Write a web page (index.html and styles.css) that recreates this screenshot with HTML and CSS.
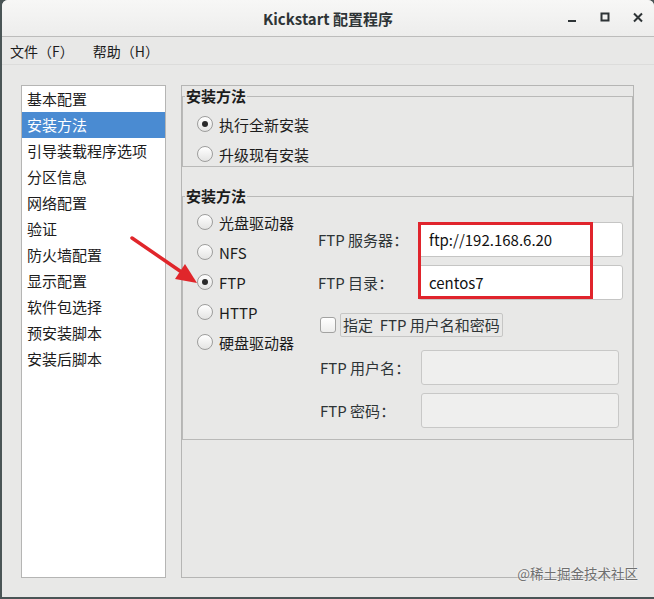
FILE: index.html
```html
<!DOCTYPE html>
<html lang="zh-CN">
<head>
    <meta charset="UTF-8">
    <title>Kickstart 配置程序</title>
    <link rel="stylesheet" href="styles.css">
</head>
<body>
    <div class="window">
        <div class="titlebar">
            <span></span>
            <span class="title">Kickstart 配置程序</span>
            <div class="controls">
                <span class="ctl"><svg width="12" height="12" viewBox="0 0 12 12"><rect x="2" y="8" width="8" height="2" fill="#2e3436"/></svg></span>
                <span class="ctl"><svg width="12" height="12" viewBox="0 0 12 12"><rect x="2.5" y="1.5" width="7" height="7" fill="none" stroke="#2e3436" stroke-width="2"/></svg></span>
                <span class="ctl"><svg width="12" height="12" viewBox="0 0 12 12"><path d="M2 1.5 L10 9.5 M10 1.5 L2 9.5" stroke="#2e3436" stroke-width="2"/></svg></span>
            </div>
        </div>

        <div class="menubar">
            <span>文件（F）</span>
            <span>帮助（H）</span>
        </div>

        <div class="content">
            <ul class="nav">
                <li>基本配置</li>
                <li class="active">安装方法</li>
                <li>引导装载程序选项</li>
                <li>分区信息</li>
                <li>网络配置</li>
                <li>验证</li>
                <li>防火墙配置</li>
                <li>显示配置</li>
                <li>软件包选择</li>
                <li>预安装脚本</li>
                <li>安装后脚本</li>
            </ul>

            <div class="panel">
                <fieldset class="frame frame-type">
                    <legend>安装方法</legend>
                    <div class="radio-list">
                        <label class="radio checked"><span class="dot"></span>执行全新安装</label>
                        <label class="radio"><span class="dot"></span>升级现有安装</label>
                    </div>
                </fieldset>

                <fieldset class="frame frame-method">
                    <legend>安装方法</legend>
                    <div class="method">
                        <div class="radio-list media">
                            <label class="radio"><span class="dot"></span>光盘驱动器</label>
                            <label class="radio"><span class="dot"></span>NFS</label>
                            <label class="radio checked"><span class="dot"></span>FTP</label>
                            <label class="radio"><span class="dot"></span>HTTP</label>
                            <label class="radio"><span class="dot"></span>硬盘驱动器</label>
                        </div>

                        <div class="ftp-form">
                            <div class="row">
                                <span class="label">FTP 服务器<span class="colon">：</span></span>
                                <div class="input">ftp://192.168.6.20</div>
                            </div>
                            <div class="row">
                                <span class="label">FTP 目录<span class="colon">：</span></span>
                                <div class="input">centos7</div>
                            </div>
                            <div class="check-row">
                                <span class="checkbox"></span>
                                <span class="check-label">指定  FTP 用户名和密码</span>
                            </div>
                            <div class="row row-off">
                                <span class="label">FTP 用户名<span class="colon">：</span></span>
                                <div class="input disabled"></div>
                            </div>
                            <div class="row row-off">
                                <span class="label">FTP 密码<span class="colon">：</span></span>
                                <div class="input disabled"></div>
                            </div>
                            <div class="highlight"></div>
                        </div>
                    </div>
                </fieldset>
            </div>
        </div>

        <svg class="arrow" width="75" height="58" viewBox="0 0 75 58">
            <line x1="4" y1="6" x2="52" y2="39" stroke="#e0262b" stroke-width="3.5" stroke-linecap="round"/>
            <polygon points="69,51 47,47 57,32" fill="#e0262b"/>
        </svg>

        <div class="watermark">@稀土掘金技术社区</div>
    </div>
</body>
</html>
```

FILE: styles.css
```css
body {
    margin: 0;
    background: #4a5556;
    font-family: "Noto Sans CJK SC", "Noto Sans", sans-serif;
    color: #1c1c1c;
}

.window {
    position: relative;
    margin-left: 2px;
    width: 652px;
    height: 597px;
    background: #e8e8e7;
    border-radius: 6px 6px 0 0;
    display: flex;
    flex-direction: column;
    overflow: hidden;
}

.titlebar {
    height: 36px;
    display: grid;
    grid-template-columns: 1fr auto 1fr;
    align-items: center;
    background: linear-gradient(#f7f7f6, #ededec);
    border-bottom: 1px solid #bcbcbb;
}

.title {
    font-size: 15px;
    font-weight: 700;
    color: #2e3436;
}

.controls {
    justify-self: end;
    display: flex;
}

.ctl {
    width: 33px;
    height: 36px;
    display: flex;
    align-items: center;
    justify-content: center;
}

.menubar {
    height: 27px;
    display: flex;
    align-items: center;
    gap: 19px;
    padding-left: 8px;
    font-size: 14px;
    border-bottom: 1px solid #dcdcdb;
}

.content {
    flex: 1;
    display: flex;
    gap: 15px;
    padding: 20px 20px 19px 19px;
    min-height: 0;
}

.nav {
    width: 143px;
    margin: 0;
    padding: 0;
    list-style: none;
    background: #fff;
    border: 1px solid #b5b5b4;
    font-size: 15px;
}

.nav li {
    height: 26px;
    line-height: 26px;
    padding-left: 5px;
}

.nav li.active {
    background: #4a8bd2;
    color: #fff;
}

.panel {
    flex: 1;
    border: 1px solid #b5b5b4;
}

.frame {
    margin: 0;
    padding: 0;
    border: 1px solid #b9b9b8;
    min-width: 0;
}

.frame legend {
    margin-left: -12px;
    padding: 0 1px;
    font-size: 15px;
    font-weight: 700;
    line-height: 18px;
    color: #1c1c1c;
}

.frame-type {
    margin-top: 1px;
    padding: 7px 0 0 14px;
}

.frame-method {
    margin-top: 20px;
    padding: 5px 0 0 14px;
}

.radio-list {
    display: flex;
    flex-direction: column;
    gap: 6px;
}

.radio {
    height: 24px;
    display: flex;
    align-items: center;
    gap: 6px;
    font-size: 15px;
}

.dot {
    width: 14px;
    height: 14px;
    border: 1px solid #9d9d9c;
    border-radius: 50%;
    background: linear-gradient(#ffffff, #e4e4e3);
    display: flex;
    align-items: center;
    justify-content: center;
}

.radio.checked .dot::after {
    content: "";
    width: 6px;
    height: 6px;
    border-radius: 50%;
    background: #2a2a2a;
}

.method {
    display: flex;
}

.media {
    width: 121px;
}

.ftp-form {
    position: relative;
    padding: 12px 0 11px;
    display: flex;
    flex-direction: column;
    gap: 8px;
}

.row {
    display: flex;
    align-items: center;
    font-size: 15px;
}

.label {
    width: 100px;
    color: #2e3436;
}

.colon {
    font-family: "Noto Sans CJK TC", sans-serif;
}

.input {
    width: 193px;
    height: 33px;
    line-height: 33px;
    padding-left: 10px;
    background: #fff;
    border: 1px solid #c5c5c4;
    border-radius: 3px;
    color: #111;
}

.row-off {
    padding-left: 2px;
}

.row-off .label {
    width: 101px;
}

.input.disabled {
    width: 196px;
    padding-left: 0;
    background: #efefee;
    border-color: #c8c8c7;
}

.check-row {
    display: flex;
    align-items: center;
    gap: 4px;
    padding-left: 2px;
    margin: 5px 0;
    font-size: 15px;
}

.checkbox {
    width: 14px;
    height: 14px;
    border: 1px solid #a2a2a1;
    border-radius: 3px;
    background: linear-gradient(#ffffff, #ededec);
}

.check-label {
    height: 22px;
    line-height: 22px;
    padding: 0 2px;
    white-space: pre;
    border: 1px solid #c6c6c5;
    border-radius: 2px;
    color: #2e3436;
}

.highlight {
    position: absolute;
    left: 100px;
    top: 12px;
    width: 169px;
    height: 71px;
    border: 3px solid #e0242c;
}

.arrow {
    position: absolute;
    left: 126px;
    top: 232px;
}

.watermark {
    position: absolute;
    right: 16px;
    bottom: 14px;
    font-size: 13.5px;
    color: #6f6f6f;
    text-shadow: 0 0 2px #fff;
}
```
